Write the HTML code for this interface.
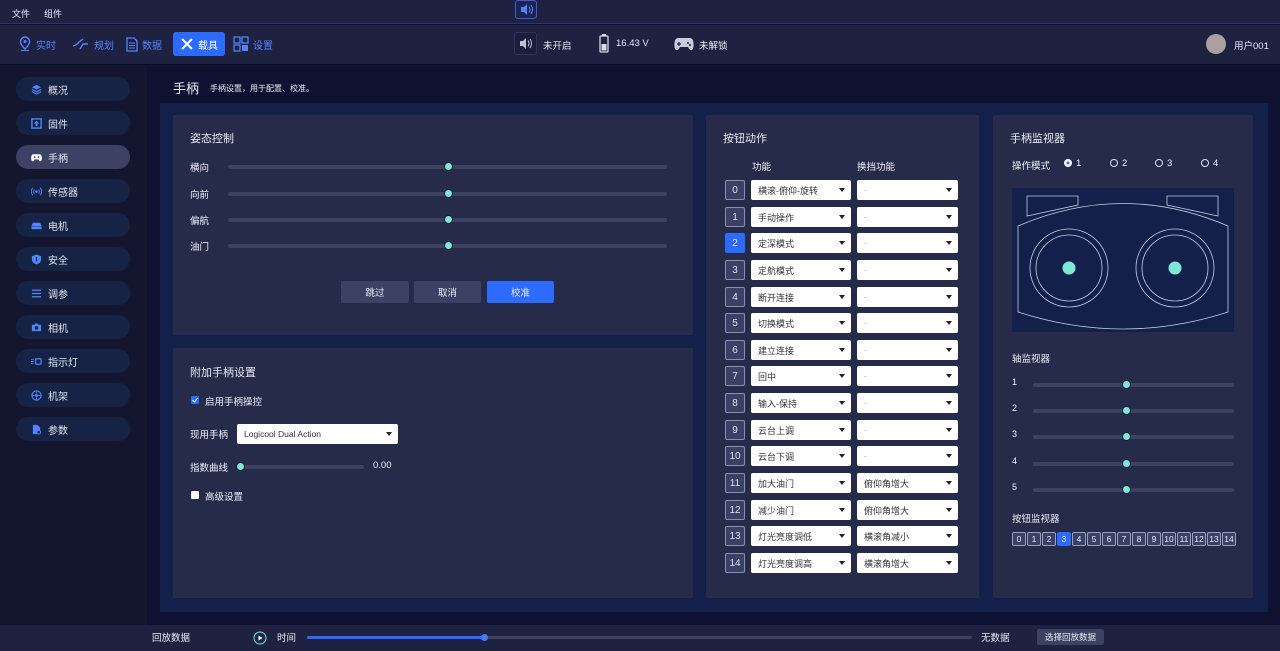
<!DOCTYPE html>
<html><head><meta charset="utf-8"><style>
*{box-sizing:border-box;margin:0;padding:0}
body{width:1280px;height:651px;overflow:hidden;background:#0e1230;font-family:"Liberation Sans","Noto Sans CJK SC",sans-serif;color:#e8eaf4;font-size:10px;position:relative}
.abs{position:absolute}
.top{left:0;top:0;width:1280px;height:24px;background:#1e2140;border-bottom:1px solid #2f3560}
.nav{left:0;top:25px;width:1280px;height:39px;background:#1e2140;box-shadow:0 1px 0 #0a0c20}
.navi{position:absolute;top:8px;height:22px;display:flex;align-items:center;gap:4px;color:#4f86ff;font-size:10px}
.side{left:0;top:65px;width:147px;height:560px;background:#141630}
.si{position:absolute;left:16px;width:114px;height:24px;border-radius:12px;background:#172345;display:flex;align-items:center;padding-left:15px;gap:6px;font-size:10px;color:#e0e4f0}
.si.act{background:#3c4264}
.si svg{width:11px;height:11px}
.panel{left:160px;top:103px;width:1108px;height:509px;background:#13204a}
.card{position:absolute;background:#262b4a;border-radius:2px}
.h{position:absolute;font-size:11px;color:#e8eaf4}
.lbl{position:absolute;font-size:9.5px;color:#f0f2fa}
.track{position:absolute;height:4px;background:#3d425f;border-radius:2px}
.thumb{position:absolute;width:9px;height:9px;border-radius:50%;background:#7fe6d8;border:1px solid #1a1f3a}
.btn{position:absolute;height:22px;background:#3c4264;border-radius:2px;font-size:9.5px;display:flex;align-items:center;justify-content:center}
.num{position:absolute;left:725px;width:20px;height:20px;border:1px solid #8a90b0;background:#3a4066;border-radius:2px;font-size:10px;display:flex;align-items:center;justify-content:center;color:#dfe3f0}
.num.a{background:#2d6bff;border-color:#2d6bff}
.sel{position:absolute;height:20px;background:#fff;border-radius:2px;color:#333;font-size:9px;display:flex;align-items:center;padding-left:7px}
.sel:after{content:"";position:absolute;right:6px;top:8px;border:3px solid transparent;border-top:4px solid #222}
.bm{display:inline-flex;width:14px;height:14px;border:1px solid #9aa0c0;background:#3a4066;margin-right:1px;font-size:8.5px;align-items:center;justify-content:center;border-radius:2px}
.rad{display:inline-block;width:8px;height:8px;border:1px solid #dfe3f0;border-radius:50%;vertical-align:-1px;margin-right:4px}
.bot{left:0;top:625px;width:1280px;height:26px;background:#1e2140}
</style></head><body>
<div class="abs top">
 <span class="abs" style="left:12px;top:7px;font-size:9px">文件</span>
 <span class="abs" style="left:44px;top:7px;font-size:9px">组件</span>
 <div class="abs" style="left:515px;top:0;width:22px;height:19px;border:1px solid #3a5fd0;border-radius:3px;background:#1c2350"><svg width="20" height="17" viewBox="0 0 20 17"><path d="M5 6h3l3-3v11l-3-3H5z" fill="#4f86ff"/><path d="M13 5.5q2 3 0 6M15 4q3 4.5 0 9" stroke="#4f86ff" fill="none" stroke-width="1"/></svg></div>
</div>
<div class="abs nav">
 <div class="navi" style="left:18px"><svg width="14" height="16" viewBox="0 0 14 16"><path d="M7 1a4.5 4.5 0 0 1 4.5 4.5C11.5 9 7 13 7 13S2.5 9 2.5 5.5A4.5 4.5 0 0 1 7 1z" stroke="#4f86ff" fill="none" stroke-width="1.4"/><circle cx="7" cy="5.5" r="1.5" fill="#4f86ff"/><path d="M3 14.5h8" stroke="#4f86ff"/></svg>实时</div>
 <div class="navi" style="left:72px"><svg width="18" height="14" viewBox="0 0 18 14"><path d="M1 9q4-1 6-4l4-3M8 12l3-5h5" stroke="#4f86ff" fill="none" stroke-width="1.4"/></svg>规划</div>
 <div class="navi" style="left:126px"><svg width="12" height="15" viewBox="0 0 12 15"><path d="M1 1h7l3 3v10H1z" stroke="#4f86ff" fill="none" stroke-width="1.3"/><path d="M3 6h6M3 8.5h6M3 11h6" stroke="#4f86ff"/></svg>数据</div>
 <div class="navi" style="left:173px;top:7px;width:52px;height:24px;background:#2d6bff;border-radius:3px;color:#fff;padding-left:7px"><svg width="14" height="14" viewBox="0 0 14 14"><path d="M2 2l10 10M12 2L2 12" stroke="#fff" stroke-width="2"/></svg>载具</div>
 <div class="navi" style="left:233px"><svg width="16" height="16" viewBox="0 0 16 16"><rect x="1" y="1" width="6" height="6" stroke="#4f86ff" fill="none" stroke-width="1.3"/><rect x="9" y="1" width="6" height="6" stroke="#4f86ff" fill="none" stroke-width="1.3"/><rect x="1" y="9" width="6" height="6" stroke="#4f86ff" fill="none" stroke-width="1.3"/><rect x="9" y="9" width="6" height="6" fill="#4f86ff"/></svg>设置</div>
 <div class="abs" style="left:514px;top:7px;width:23px;height:23px;border:1px solid #2e3458;border-radius:3px;background:#1a1e3a"><svg width="21" height="21" viewBox="0 0 21 21"><path d="M5 8h3l3-3v11l-3-3H5z" fill="#bfc4d8"/><path d="M13 7.5q2 3 0 6M15 6q3 4.5 0 9" stroke="#bfc4d8" fill="none"/></svg></div>
 <span class="abs" style="left:543px;top:13px;font-size:9.5px">未开启</span>
 <svg class="abs" style="left:599px;top:9px" width="10" height="19" viewBox="0 0 10 19"><rect x="1" y="2" width="8" height="16" rx="1" stroke="#d8dcea" fill="none" stroke-width="1.3"/><rect x="3" y="0" width="4" height="2" fill="#d8dcea"/><rect x="2.5" y="10" width="5" height="6.5" fill="#d8dcea"/></svg>
 <span class="abs" style="left:616px;top:13px;font-size:9.5px">16.43 V</span>
 <svg class="abs" style="left:674px;top:11px" width="20" height="15" viewBox="0 0 20 15"><path d="M4 2h12q3 0 3.5 5t-1.5 7q-2 1-4-3H6q-2 4-4 3T.5 7Q1 2 4 2z" fill="#c8ccdc"/><path d="M5 6v4M3 8h4" stroke="#1e2140" stroke-width="1.2"/><circle cx="14" cy="7" r="1" fill="#1e2140"/><circle cx="16" cy="9" r="1" fill="#1e2140"/></svg>
 <span class="abs" style="left:699px;top:13px;font-size:9.5px">未解锁</span>
 <div class="abs" style="left:1206px;top:9px;width:20px;height:20px;border-radius:50%;background:#aaa0a0"></div>
 <span class="abs" style="left:1234px;top:13px;font-size:9.5px">用户001</span>
</div>
<div class="abs side">
 <div class="si" style="top:12px"><svg viewBox="0 0 12 12"><path d="M6 1l5 2.5-5 2.5-5-2.5z" fill="#4f86ff"/><path d="M1 6l5 2.5L11 6M1 8.5L6 11l5-2.5" stroke="#4f86ff" fill="none" stroke-width="1.2"/></svg>概况</div>
 <div class="si" style="top:46px"><svg viewBox="0 0 12 12"><rect x="1" y="1" width="10" height="10" stroke="#4f86ff" fill="none" stroke-width="1.5"/><path d="M6 3l3 3H7v3H5V6H3z" fill="#4f86ff"/></svg>固件</div>
 <div class="si act" style="top:80px"><svg viewBox="0 0 12 12"><path d="M2.5 2.5h7q2 0 2.3 3.5T10.5 10q-1.5.5-2.5-2h-4q-1 2.5-2.5 2T.2 6Q.5 2.5 2.5 2.5z" fill="#fff"/><circle cx="4" cy="5.5" r="1" fill="#3c4264"/><circle cx="8" cy="5.5" r="1" fill="#3c4264"/></svg>手柄</div>
 <div class="si" style="top:114px"><svg viewBox="0 0 12 12"><circle cx="6" cy="6" r="1.4" fill="#4f86ff"/><path d="M3.8 3.8a3 3 0 0 0 0 4.4M8.2 3.8a3 3 0 0 1 0 4.4M2 2a5.5 5.5 0 0 0 0 8M10 2a5.5 5.5 0 0 1 0 8" stroke="#4f86ff" fill="none"/></svg>传感器</div>
 <div class="si" style="top:148px"><svg viewBox="0 0 12 12"><path d="M2 3h8l1.5 3.5H.5z" fill="#4f86ff"/><rect x=".5" y="7" width="11" height="3" fill="#4f86ff"/></svg>电机</div>
 <div class="si" style="top:182px"><svg viewBox="0 0 12 12"><path d="M6 .5l5 2v3.5q0 4-5 5.5Q1 10 1 6V2.5z" fill="#4f86ff"/><path d="M6 3v5" stroke="#172345" stroke-width="1.3"/></svg>安全</div>
 <div class="si" style="top:216px"><svg viewBox="0 0 12 12"><path d="M1 2.5h10M1 6h10M1 9.5h10" stroke="#4f86ff" stroke-width="1.4"/></svg>调参</div>
 <div class="si" style="top:250px"><svg viewBox="0 0 12 12"><path d="M1 3h3l1-1.5h2L8 3h3v7H1z" fill="#4f86ff"/><circle cx="6" cy="6.5" r="2" fill="#172345"/></svg>相机</div>
 <div class="si" style="top:284px"><svg viewBox="0 0 12 12"><rect x="5" y="3" width="6" height="6" rx="1" stroke="#4f86ff" fill="none" stroke-width="1.3"/><path d="M0 4h3M0 6h3M0 8h3" stroke="#4f86ff"/></svg>指示灯</div>
 <div class="si" style="top:318px"><svg viewBox="0 0 12 12"><circle cx="6" cy="6" r="5" stroke="#4f86ff" fill="none" stroke-width="1.3"/><circle cx="6" cy="6" r="1.6" fill="#4f86ff"/><path d="M6 1v3M6 8v3M1 6h3M8 6h3" stroke="#4f86ff"/></svg>机架</div>
 <div class="si" style="top:352px"><svg viewBox="0 0 12 12"><path d="M2 1h5l3 3v7H2z" fill="#4f86ff"/><circle cx="8.5" cy="9" r="2" fill="#172345" stroke="#4f86ff"/></svg>参数</div>
</div>
<div class="abs" style="left:173px;top:78px;font-size:13px">手柄</div>
<div class="abs" style="left:210px;top:83px;font-size:8px">手柄设置，用于配置、校准。</div>
<div class="abs panel"></div>

<div class="card" style="left:173px;top:115px;width:520px;height:220px"></div>
<div class="h" style="left:190px;top:130px">姿态控制</div>
<div class="lbl" style="left:190px;top:160px">横向</div>
<div class="lbl" style="left:190px;top:187px">向前</div>
<div class="lbl" style="left:190px;top:213px">偏航</div>
<div class="lbl" style="left:190px;top:239px">油门</div>
<div class="track" style="left:228px;top:165px;width:439px"></div><div class="thumb" style="left:444px;top:162px"></div>
<div class="track" style="left:228px;top:192px;width:439px"></div><div class="thumb" style="left:444px;top:189px"></div>
<div class="track" style="left:228px;top:218px;width:439px"></div><div class="thumb" style="left:444px;top:215px"></div>
<div class="track" style="left:228px;top:244px;width:439px"></div><div class="thumb" style="left:444px;top:241px"></div>
<div class="btn" style="left:341px;top:281px;width:68px">跳过</div>
<div class="btn" style="left:414px;top:281px;width:67px">取消</div>
<div class="btn" style="left:487px;top:281px;width:67px;background:#2d6bff">校准</div>

<div class="card" style="left:173px;top:348px;width:520px;height:250px"></div>
<div class="h" style="left:190px;top:364px">附加手柄设置</div>
<div class="abs" style="left:191px;top:396px;width:8px;height:8px;background:#2d6bff;border-radius:1px"><svg width="8" height="8" viewBox="0 0 8 8"><path d="M1.5 4l2 2 3-4" stroke="#fff" fill="none"/></svg></div>
<div class="lbl" style="left:205px;top:394px">启用手柄操控</div>
<div class="lbl" style="left:190px;top:427px">现用手柄</div>
<div class="sel" style="left:237px;top:424px;width:161px;height:20px;font-size:8.5px">Logicool Dual Action</div>
<div class="lbl" style="left:190px;top:460px">指数曲线</div>
<div class="track" style="left:240px;top:465px;width:124px"></div><div class="thumb" style="left:236px;top:462px"></div>
<div class="lbl" style="left:373px;top:460px">0.00</div>
<div class="abs" style="left:191px;top:491px;width:8px;height:8px;background:#fff;border-radius:1px"></div>
<div class="lbl" style="left:205px;top:489px">高级设置</div>

<div class="card" style="left:706px;top:115px;width:273px;height:483px"></div>
<div class="h" style="left:723px;top:130px">按钮动作</div>
<div class="lbl" style="left:752px;top:159px">功能</div>
<div class="lbl" style="left:857px;top:159px">换挡功能</div>
<div id="rows"></div>

<div class="card" style="left:993px;top:115px;width:260px;height:483px"></div>
<div class="h" style="left:1010px;top:130px">手柄监视器</div>
<div class="lbl" style="left:1012px;top:158px">操作模式</div>
<div class="lbl" style="left:1064px;top:158px"><span class="rad" style="background:#2d6bff;border-color:#fff;box-shadow:inset 0 0 0 1.5px #fff"></span>1</div>
<div class="lbl" style="left:1110px;top:158px"><span class="rad"></span>2</div>
<div class="lbl" style="left:1155px;top:158px"><span class="rad"></span>3</div>
<div class="lbl" style="left:1201px;top:158px"><span class="rad"></span>4</div>
<svg class="abs" style="left:1012px;top:188px" width="222" height="144" viewBox="0 0 222 144">
<rect width="222" height="144" rx="2" fill="#13204a"/>
<g stroke="#c8cce0" fill="none" stroke-width="0.8">
<path d="M15 8h51v9l-51 11z"/><path d="M206 8h-51v9l51 11z"/>
<path d="M6 38q105-45 210 0v86q-105 34-210 0z"/>
<circle cx="57" cy="80" r="39"/><circle cx="57" cy="80" r="33"/>
<circle cx="163" cy="80" r="39"/><circle cx="163" cy="80" r="33"/>
</g>
<circle cx="57" cy="80" r="6.5" fill="#7fe6d8"/><circle cx="163" cy="80" r="6.5" fill="#7fe6d8"/>
</svg>
<div class="h" style="left:1012px;top:351px;font-size:9.5px">轴监视器</div>
<div id="axes"></div>
<div class="h" style="left:1012px;top:511px;font-size:9.5px">按钮监视器</div>
<div class="abs" style="left:1012px;top:532px;display:flex" id="bm"></div>

<div class="abs bot">
 <span class="abs" style="left:152px;top:5px;font-size:9.5px">回放数据</span>
 <svg class="abs" style="left:253px;top:6px" width="14" height="14" viewBox="0 0 14 14"><circle cx="7" cy="7" r="6" stroke="#7fe6d8" fill="#1a2a4a" stroke-width="1"/><path d="M5.5 4.5v5l4-2.5z" fill="#fff"/></svg>
 <span class="abs" style="left:277px;top:5px;font-size:9.5px">时间</span>
 <div class="abs" style="left:307px;top:11px;width:665px;height:3px;background:#3d425f;border-radius:2px"></div>
 <div class="abs" style="left:307px;top:11px;width:178px;height:3px;background:#2d6bff;border-radius:2px"></div>
 <div class="abs" style="left:481px;top:9px;width:7px;height:7px;border-radius:50%;background:#3f7bff"></div>
 <span class="abs" style="left:981px;top:5px;font-size:9.5px">无数据</span>
 <div class="abs" style="left:1037px;top:4px;width:67px;height:16px;background:#3c4264;border-radius:2px;font-size:8.5px;display:flex;align-items:center;justify-content:center">选择回放数据</div>
</div>
<script>
var f=["横滚-俯仰-旋转","手动操作","定深模式","定航模式","断开连接","切换模式","建立连接","回中","输入-保持","云台上调","云台下调","加大油门","减少油门","灯光亮度调低","灯光亮度调高"];
var g=["-","-","-","-","-","-","-","-","-","-","-","俯仰角增大","俯仰角增大","横滚角减小","横滚角增大"];
var h="";
for(var i=0;i<15;i++){var y=Math.round(180+i*26.64);
h+='<div class="num'+(i==2?' a':'')+'" style="top:'+y+'px">'+i+'</div>';
h+='<div class="sel" style="left:751px;top:'+y+'px;width:100px">'+f[i]+'</div>';
h+='<div class="sel" style="left:857px;top:'+y+'px;width:101px;'+(g[i]=='-'?'color:#aaa':'')+'">'+g[i]+'</div>';}
document.getElementById('rows').innerHTML=h;
var a="";for(var j=0;j<5;j++){var yy=Math.round(384+j*26.2);
a+='<div class="lbl" style="left:1012px;top:'+(yy-7)+'px;font-size:9px">'+(j+1)+'</div><div class="track" style="left:1033px;top:'+(yy-1)+'px;width:201px"></div><div class="thumb" style="left:1122px;top:'+(yy-4)+'px"></div>';}
document.getElementById('axes').innerHTML=a;
var b="";for(var k=0;k<15;k++)b+='<span class="bm" style="'+(k==3?'background:#2d6bff;border-color:#2d6bff':'')+'">'+k+'</span>';
document.getElementById('bm').innerHTML=b;
</script>
</body></html>
